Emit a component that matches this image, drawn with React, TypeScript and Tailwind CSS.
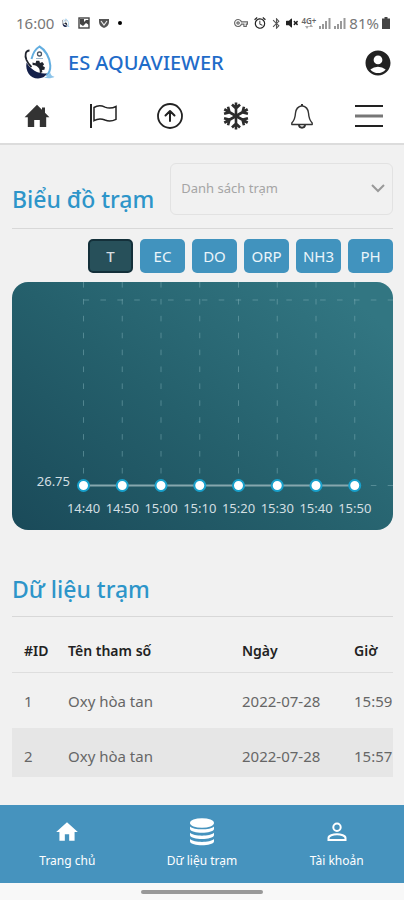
import { useState } from "react";
import type { ReactNode } from "react";
import { FaVolumeMute } from "react-icons/fa";
import { MdAccountCircle, MdAlarm, MdBluetooth, MdHome, MdOutlineVpnKey } from "react-icons/md";

const params = ["T", "EC", "DO", "ORP", "NH3", "PH"];

const times = ["14:40", "14:50", "15:00", "15:10", "15:20", "15:30", "15:40", "15:50"];

const rows = [
  { id: 1, name: "Oxy hòa tan", date: "2022-07-28", time: "15:59" },
  { id: 2, name: "Oxy hòa tan", date: "2022-07-28", time: "15:57" },
  { id: 3, name: "Oxy hòa tan", date: "2022-07-28", time: "15:55" },
];

function Logo({ className }: { className?: string }) {
  return (
    <svg viewBox="0 0 32 36" className={className} aria-hidden="true">
      <path d="M7.500 14C9 8 12 3.500 15.500 1.500c5.500 3 10.500 11 10.800 19 .2 4.500-1.500 8-4 10" fill="none" stroke="#63aee0" strokeWidth="2" />
      <path d="M20 32.500c3.500-.5 5-3 6-5.500.8 3 2 4.500 4.500 4.700-2 1.500-7 2.100-10.500.8z" fill="#8cc4ea" />
      <path d="M5.500 5.500C1.500 5.500.5 10 2.500 15c1.200 2.800 3 5.200 5 7" fill="none" stroke="#20242e" strokeWidth="1.800" />
      <path d="M2.500 17.500c-1.500 8.500 3.500 16 11.500 16 4 0 7.500-1.800 9-5.200C16 29.500 7 25.500 2.500 17.500z" fill="#14204a" />
      <path d="M8.500 17.500l3 .8.800-2.500h3l.7 2.200 2.300-.9 1.800 2.200-1.400 1.600 2.200 1.400-.5 2.500-2.400.2.400 2.300-2.800 1c1-4.500-1.500-7.800-7-8.300z" fill="#20242e" />
      <circle cx="15.500" cy="9" r="2" fill="none" stroke="#4b5563" strokeWidth="1.300" />
      <path d="M12 13.500h7" stroke="#9db7cc" strokeWidth="1" />
    </svg>
  );
}

function HomeIcon() {
  return (
    <svg viewBox="0 0 26 24" className="h-6 w-[26px]" fill="#333">
      <path d="M13 .8L.6 13.200h3.200V23h6.400v-7h5.600v7h6.400v-9.800h3.200L21 8.800V3.500h-3v2.300z" />
    </svg>
  );
}

function FlagIcon() {
  return (
    <svg viewBox="0 0 28 26" className="h-[26px] w-7" fill="none" stroke="#222">
      <path d="M2 1v24" strokeWidth="2" />
      <path d="M5 4.500c4-2.500 7.500-2 11-.4 3.500 1.500 7 1.400 11-.6v12.800c-4 2-7.500 2.100-11 .7-3.500-1.500-7-1.800-11 .7z" strokeWidth="1.500" />
    </svg>
  );
}

function UploadIcon() {
  return (
    <svg viewBox="0 0 28 28" className="h-7 w-7" fill="none" stroke="#222" strokeLinecap="round" strokeLinejoin="round">
      <circle cx="14" cy="14" r="12" strokeWidth="1.800" />
      <path d="M14 19V9.500M9.500 13.500L14 9l4.500 4.500" strokeWidth="2" />
    </svg>
  );
}

function SnowflakeIcon() {
  return (
    <svg viewBox="-14 -14 28 28" className="h-7 w-7" fill="none" stroke="#2c2c2c" strokeWidth="2.600">
      {[0, 60, 120, 180, 240, 300].map((angle) => (
        <path key={angle} transform={`rotate(${angle})`} d="M0 0V-13.500M-4 -11.500L0 -7.500L4 -11.500" />
      ))}
    </svg>
  );
}

function BellIcon() {
  return (
    <svg viewBox="0 0 24 26" className="h-[26px] w-6" fill="none" stroke="#333" strokeWidth="1.400" strokeLinejoin="round">
      <path d="M12 2.700C7.800 3.500 5.800 6.500 5.500 10c-.3 5-1.300 7.500-3.700 10v1.500h20.400V20c-2.400-2.500-3.400-5-3.700-10-.3-3.500-2.300-6.500-6.500-7.300z" />
      <path d="M12 3V1M9 22c.3 3.500 5.700 3.500 6 0" strokeWidth="2" />
    </svg>
  );
}

function MenuIcon() {
  return (
    <svg viewBox="0 0 28 24" className="h-6 w-7" fill="none" strokeWidth="2">
      <path d="M0 2h28M0 22h28" stroke="#222" />
      <path d="M0 12h28" stroke="#777" strokeWidth="3" />
    </svg>
  );
}

function CoinsIcon() {
  return (
    <svg viewBox="0 0 26 30" className="h-[30px] w-[26px]" fill="#fff">
      <ellipse cx="13" cy="6" rx="12" ry="4.800" />
      <path d="M1 9.500c4 3.800 20 3.800 24 0v2.500c-1 5-23 5-24 0z" />
      <path d="M1 15.800c4 3.800 20 3.800 24 0v2.500c-1 5-23 5-24 0z" />
      <path d="M1 22.100c4 3.800 20 3.800 24 0v2.500c-1 5-23 5-24 0z" />
    </svg>
  );
}

function PersonIcon() {
  return (
    <svg viewBox="0 0 20 20" className="h-5 w-5" fill="none" stroke="#fff" strokeWidth="2">
      <circle cx="10" cy="5.200" r="3.700" />
      <path d="M1.500 18v-2c0-2.300 4.500-3.800 8.500-3.800s8.500 1.500 8.500 3.800v2z" />
    </svg>
  );
}

function SignalIcon() {
  return (
    <svg viewBox="0 0 12 12" className="h-3 w-3" fill="#999">
      <path d="M0 9h2v3H0zM3 7h2v5H3zM6 4h2v8H6zM9.500 1h2v11h-2z" />
    </svg>
  );
}

function StatusBar() {
  return (
    <div className="flex h-11 items-center justify-between pt-[2px] pr-[14px] pl-4 text-[#777]">
      <div className="flex items-center gap-2">
        <span className="text-[15px]">16:00</span>
        <Logo className="h-[10px] w-2" />
        <svg viewBox="0 0 12 12" className="h-3 w-3">
          <rect x="1" y="1" width="10" height="10" fill="none" stroke="#444" strokeWidth="1.400" />
          <path d="M2 7V2h4v3l2-2h3v5L8 6 5 9z" fill="#444" />
        </svg>
        <svg viewBox="0 0 12 12" className="h-3 w-3">
          <path d="M1 2h10v3c0 3-2 5-5 6C3 10 1 8 1 5z" fill="#555" />
          <path d="M3 4l3 4 3-4" fill="none" stroke="#eee" strokeWidth="1.200" />
        </svg>
        <span className="h-1 w-1 rounded-full bg-black" />
      </div>
      <div className="flex items-center gap-[3px]">
        <MdOutlineVpnKey className="mr-[2px] h-[14px] w-[14px]" color="#666" />
        <MdAlarm className="h-[14px] w-[14px]" color="#222" stroke="#222" />
        <MdBluetooth className="h-[13px] w-[13px]" color="#555" />
        <FaVolumeMute className="h-3 w-3" color="#222" />
        <span className="flex flex-col items-center text-[8px] leading-[7px] font-semibold text-[#666]">
          <span>4G+</span>
          <svg viewBox="0 0 8 5" className="h-[5px] w-2" fill="#aaa">
            <path d="M2 5L0 2h4zM6 0l2 3H4z" />
          </svg>
        </span>
        <SignalIcon />
        <SignalIcon />
        <span className="text-[15px]">81%</span>
        <svg viewBox="0 0 8 12" className="h-3 w-2" fill="#444">
          <path d="M2.500 0h3v1.500H8V12H0V1.500h2.500z" />
        </svg>
      </div>
    </div>
  );
}

const toolbar: { label: string; icon: ReactNode }[] = [
  { label: "Trang chủ", icon: <HomeIcon /> },
  { label: "Trạm", icon: <FlagIcon /> },
  { label: "Tải lên", icon: <UploadIcon /> },
  { label: "Làm lạnh", icon: <SnowflakeIcon /> },
  { label: "Thông báo", icon: <BellIcon /> },
  { label: "Menu", icon: <MenuIcon /> },
];

function Header() {
  return (
    <header className="border-b-2 border-[#dcdcdc] bg-white pb-[3px]">
      <StatusBar />
      <div className="flex h-10 items-center pr-[11px] pb-[2px] pl-6">
        <Logo className="h-9 w-8" />
        <h1 className="ml-3 flex-1 text-[20px] font-medium text-[#1f6cc9]">ES AQUAVIEWER</h1>
        <button aria-label="Tài khoản">
          <MdAccountCircle className="h-[30px] w-[30px]" color="#222" />
        </button>
      </div>
      <nav className="mt-2 grid h-12 grid-cols-6 pr-[2px] pl-1">
        {toolbar.map((item) => (
          <button key={item.label} aria-label={item.label} className="flex items-center justify-center">
            {item.icon}
          </button>
        ))}
      </nav>
    </header>
  );
}

function StationChart() {
  const left = 71.5;
  const step = 38.75;
  const base = 203.5;
  const xs = times.map((_, i) => left + i * step);

  return (
    <svg viewBox="0 0 381 248" className="mt-[9px] w-full rounded-2xl">
      <defs>
        <linearGradient id="chartBg" x1="0" y1="1" x2="1" y2="0.200">
          <stop offset="0" stopColor="#1a4a59" />
          <stop offset="0.500" stopColor="#25606c" />
          <stop offset="1" stopColor="#327682" />
        </linearGradient>
      </defs>
      <rect width="381" height="248" fill="url(#chartBg)" />
      <g stroke="#7fb0b8" strokeOpacity="0.500" strokeDasharray="5.600 11.300">
        {xs.map((x) => (
          <path key={x} d={`M${x} 0V${base}`} />
        ))}
        <path d={`M${left} 18H381`} />
        <path d={`M${left} ${base}H381`} />
      </g>
      <path d={`M${left} ${base}H${xs[xs.length - 1]}`} stroke="#86a7ae" strokeWidth="2" />
      {xs.map((x) => (
        <circle key={x} cx={x} cy={base} r="5.500" fill="#fff" stroke="#18a0cb" strokeWidth="2" />
      ))}
      <g fill="#d3dfe2" className="text-[13px]">
        <text x="58" y="204" textAnchor="end">26.75</text>
        {times.map((t, i) => (
          <text key={t} x={xs[i]} y="231" textAnchor="middle">{t}</text>
        ))}
      </g>
    </svg>
  );
}

function DataTable() {
  return (
    <table className="w-full table-fixed border-separate border-spacing-0 text-left text-[15px] leading-5 whitespace-nowrap text-[#666]">
      <thead className="text-sm text-[#222] [&_th]:h-14 [&_th]:border-b [&_th]:border-[#dedede] [&_th]:pt-3 [&_th]:font-semibold">
        <tr>
          <th className="w-14 pl-3">#ID</th>
          <th>Tên tham số</th>
          <th className="w-[112px]">Ngày</th>
          <th className="w-[39px]">Giờ</th>
        </tr>
      </thead>
      <tbody className="[&>tr:nth-child(odd)>td]:h-[55px] [&>tr:nth-child(even)>td]:h-[54px] [&>tr:nth-child(even)>td]:border-b-[5px] [&>tr:nth-child(even)>td]:border-[#f1f1f1] [&>tr:nth-child(even)>td]:bg-[#e6e6e6] [&>tr:nth-child(even)>td]:pt-[6px]">
        {rows.map((row) => (
          <tr key={row.id}>
            <td className="pl-3">{row.id}</td>
            <td>{row.name}</td>
            <td>{row.date}</td>
            <td>{row.time}</td>
          </tr>
        ))}
      </tbody>
    </table>
  );
}

const tabs: { label: string; icon: ReactNode }[] = [
  { label: "Trang chủ", icon: <MdHome className="h-[26px] w-[26px]" /> },
  { label: "Dữ liệu trạm", icon: <CoinsIcon /> },
  { label: "Tài khoản", icon: <PersonIcon /> },
];

export default function App() {
  const [param, setParam] = useState("T");

  return (
    <div className="flex h-screen flex-col bg-[#f1f1f1] font-['Noto_Sans',sans-serif]">
      <Header />

      <main className="min-h-0 flex-1 overflow-y-auto pr-[11px] pl-3 [scrollbar-width:none]">
        <section>
          <div className="flex justify-between gap-4 border-b border-[#d8d8d8] pt-[18px] pb-[13px]">
            <h2 className="self-end text-[23px] leading-8 font-medium whitespace-nowrap text-[#2d95c9]">Biểu đồ trạm</h2>
            <div className="relative flex-1">
              <select
                aria-label="Danh sách trạm"
                className="h-[52px] w-full appearance-none rounded-md border border-[#e2e2e2] pr-8 pl-[10px] text-[13px] text-[#a5a5a5]"
              >
                <option>Danh sách trạm</option>
              </select>
              <svg viewBox="0 0 14 10" className="pointer-events-none absolute top-5 right-2 h-[10px] w-[14px]" fill="none" stroke="#999" strokeWidth="2">
                <path d="M1 2l6 6 6-6" />
              </svg>
            </div>
          </div>

          <div className="mt-[10px] flex justify-end gap-[7px]">
            {params.map((p) => (
              <button
                key={p}
                onClick={() => setParam(p)}
                className={`h-[34px] w-[45px] rounded-[5px] text-[15px] ${
                  p === param ? "border-2 border-[#14303a] bg-[#27505a] font-medium text-[#d5dde0]" : "bg-[#4193be] text-[#eaf5fa]"
                }`}
              >
                {p}
              </button>
            ))}
          </div>

          <StationChart />
        </section>

        <section>
          <h2 className="mt-[43px] border-b border-[#d8d8d8] pb-[11px] text-[23px] leading-8 font-medium text-[#2d95c9]">Dữ liệu trạm</h2>
          <DataTable />
        </section>
      </main>

      <footer>
        <nav className="grid h-[78px] grid-cols-3 bg-[#4693be] text-xs text-white">
          {tabs.map((tab) => (
            <a key={tab.label} href="#" className="flex flex-col items-center pt-3">
              <span className="flex h-[30px] items-center">{tab.icon}</span>
              <span className="mt-[6px]">{tab.label}</span>
            </a>
          ))}
        </nav>
        <div className="flex h-[17px] items-center justify-center bg-[#f8f8f8]">
          <span className="h-1 w-[30%] rounded-full bg-[#999]" />
        </div>
      </footer>
    </div>
  );
}
